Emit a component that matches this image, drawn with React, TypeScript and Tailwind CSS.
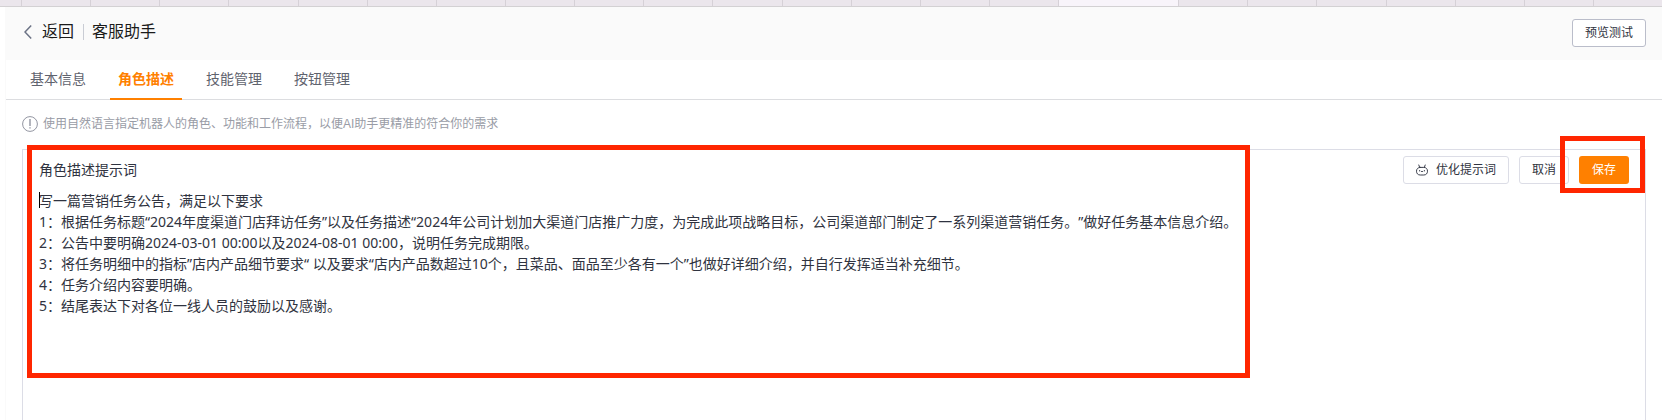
import { useState } from "react";

const TABS = ["基本信息", "角色描述", "技能管理", "按钮管理"];

const DEFAULT_PROMPT = `写一篇营销任务公告，满足以下要求
1：根据任务标题“2024年度渠道门店拜访任务”以及任务描述“2024年公司计划加大渠道门店推广力度，为完成此项战略目标，公司渠道部门制定了一系列渠道营销任务。”做好任务基本信息介绍。
2：公告中要明确2024-03-01 00:00以及2024-08-01 00:00，说明任务完成期限。
3：将任务明细中的指标”店内产品细节要求“ 以及要求“店内产品数超过10个，且菜品、面品至少各有一个”也做好详细介绍，并自行发挥适当补充细节。
4：任务介绍内容要明确。
5：结尾表达下对各位一线人员的鼓励以及感谢。`;

function BrowserTabs() {
  return (
    <div className="flex h-[7px] border-b border-[#d3d1d3] bg-[#ebe6ec]">
      <div className="w-[22px] border-r border-[#d6d1d7]" />
      {Array.from({ length: 15 }).map((_, i) => (
        <div key={i} className="flex-1 border-r border-[#d6d1d7]" />
      ))}
      <div className="w-[120px] border-r border-[#d6d1d7] bg-[#f8f4fa]" />
      {Array.from({ length: 7 }).map((_, i) => (
        <div key={i} className="flex-1 border-r border-[#d6d1d7] last:border-r-0" />
      ))}
    </div>
  );
}

function BackIcon() {
  return (
    <svg width="8" height="14" viewBox="0 0 8 14" fill="none" stroke="#6b7285" strokeWidth="1.5">
      <path d="M7.2 0.6 1 7l6.2 6.4" />
    </svg>
  );
}

function InfoIcon() {
  return (
    <svg width="16" height="16" viewBox="0 0 16 16" fill="none" stroke="#9295a1">
      <circle cx="8" cy="8" r="7.4" />
      <path d="M8 3v7" strokeWidth="1.4" />
      <path d="M8 11.2v1.4" strokeWidth="1.4" />
    </svg>
  );
}

function RobotIcon() {
  return (
    <svg width="12" height="12" viewBox="0 0 12 12" fill="none" stroke="#3b3f4c" strokeLinecap="round">
      <path d="M4.2 3.4h3.6c2.3 0 3.7 1.5 3.7 3.8S10.100 11 7.800 11H4.200C1.900 11 .5 9.500.5 7.200s1.400-3.800 3.700-3.800z" />
      <path d="M2.800 1l.8 2.200M9.200 1l-.8 2.200" />
      <path d="M3.600 6.400v.6M8.400 6.400v.6M5.200 7.500q.8.600 1.600 0" strokeWidth="0.9" />
    </svg>
  );
}

export default function App() {
  const [active, setActive] = useState(1);
  const [prompt, setPrompt] = useState(DEFAULT_PROMPT);

  return (
    <div className="flex min-h-screen flex-col bg-white font-['Liberation_Sans','Noto_Sans_CJK_SC',sans-serif] text-[#2f3340]">
      <BrowserTabs />
      <div className="ml-[5px] flex flex-1 flex-col border-l border-[#fafafa]">
        <header className="flex h-[53px] items-start justify-between bg-[#fafafa] pt-3 pr-4 pl-[18px]">
          <div className="flex items-center text-base leading-[26px] text-[#1a1a1a]">
            <a href="#" className="flex items-center gap-2.5">
              <BackIcon />
              返回
            </a>
            <span className="mr-2 ml-[9px] h-4 w-px bg-[#c9ccd4]" />
            <h1>客服助手</h1>
          </div>
          <button className="h-7 rounded-[3px] border border-[#babdca] bg-white px-3 text-xs">预览测试</button>
        </header>

        <nav className="flex h-10 gap-4 border-b border-[#dcdde0] px-4">
          {TABS.map((t, i) => (
            <button
              key={t}
              onClick={() => setActive(i)}
              className={`-mb-px h-10 border-b-2 px-2 text-sm ${
                i === active ? "border-[#ff8000] font-bold text-[#ff8000]" : "border-transparent text-[#5f636e]"
              }`}
            >
              {t}
            </button>
          ))}
        </nav>

        <main className="flex flex-1 flex-col px-4 pt-4">
          <p className="flex items-center gap-[5px] text-xs leading-4 text-[#999ca6]">
            <InfoIcon />
            使用自然语言指定机器人的角色、功能和工作流程，以便AI助手更精准的符合你的需求
          </p>

          <section className="relative mt-[17px] flex flex-1 flex-col border-x border-t border-[#dcdde6] pl-4">
            <div className="flex items-center justify-between pt-1.5 pr-4">
              <label htmlFor="prompt" className="text-sm leading-7">
                角色描述提示词
              </label>
              <div className="flex gap-2.5 text-xs">
                <button className="flex h-7 items-center gap-2 rounded-[3px] border border-[#dcdde6] px-3">
                  <RobotIcon />
                  优化提示词
                </button>
                <button className="h-7 rounded-[3px] border border-[#dcdde6] px-3">取消</button>
                <button className="h-7 rounded-[3px] bg-[#ff8000] px-[13px] text-white">保存</button>
              </div>
            </div>
            <div className="relative mt-1.5 flex flex-1">
              <textarea
                id="prompt"
                value={prompt}
                onChange={(e) => setPrompt(e.target.value)}
                className="w-full flex-1 resize-none font-['Noto_Sans','Noto_Sans_CJK_SC',sans-serif] text-sm leading-[21px] outline-none [text-spacing-trim:space-all]"
              />
              <span className="absolute top-0.5 left-0 h-4 w-px bg-black" />
            </div>

            {/* highlight frames */}
            <div className="pointer-events-none absolute -top-[5px] right-[395px] left-1 h-[233px] border-5 border-[#ff2600]" />
            <div className="pointer-events-none absolute -top-3.5 right-0 h-[57px] w-[85px] border-5 border-[#ff2600]" />
          </section>
        </main>
      </div>
    </div>
  );
}
